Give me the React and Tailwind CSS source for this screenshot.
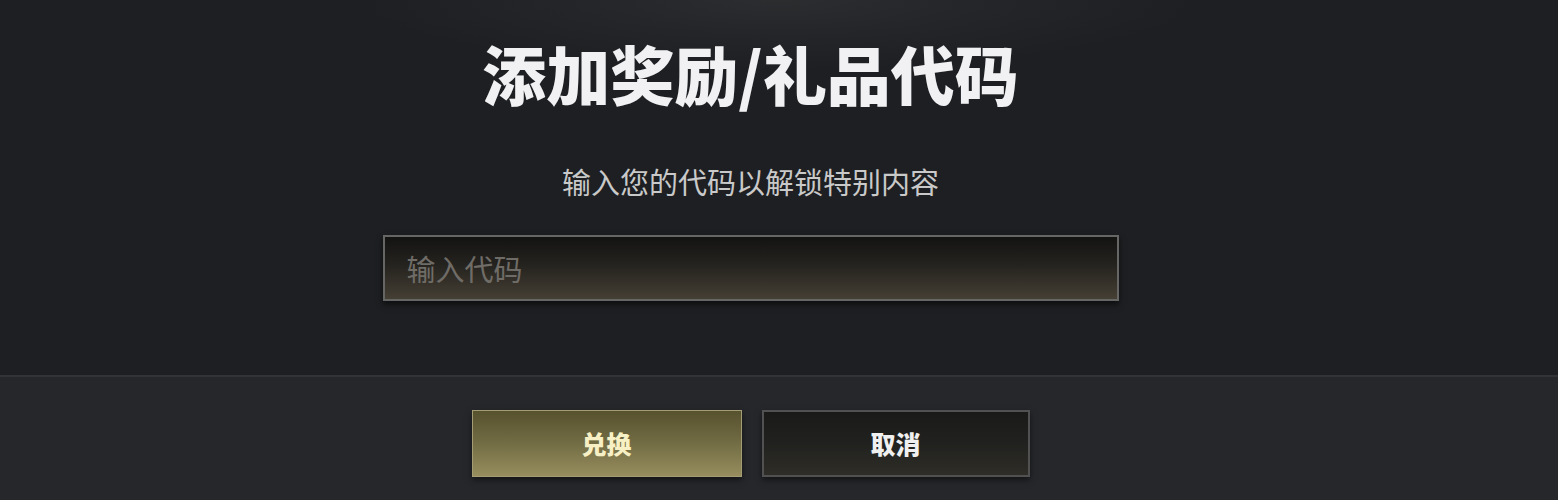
export default function App() {
  const font = { fontFamily: '"Noto Sans CJK SC", "Noto Sans", sans-serif' };
  return (
    <div className="w-full h-[500px] flex flex-col overflow-hidden" style={font}>
      <div className="h-[375px] bg-[#1d1f22] bg-[radial-gradient(ellipse_420px_70px_at_50%_0%,#2b2d2f_0%,#24262a_45%,#1d1f22_100%)] flex flex-col items-center pr-[57px]">
        <h1 className="mt-[40px] text-[64px] leading-none font-black text-[#f1f1f3]">
          添加奖励/礼品代码
        </h1>
        <p className="mt-[63px] text-[29px] leading-none text-[#c9c9c9]">
          输入您的代码以解锁特别内容
        </p>
        <div className="mt-[39px] w-[736px] h-[66px] border-2 border-[#666664] bg-[linear-gradient(to_bottom,#131312_0%,#25231f_45%,#453f34_100%)] shadow-[0_3px_6px_rgba(0,0,0,0.6)] flex items-center">
          <input
            className="w-full h-full bg-transparent outline-none pl-[22px] text-[29px] text-[#cfcfcf] placeholder:text-[#6f6c67]"
            style={font}
            placeholder="输入代码"
          />
        </div>
      </div>
      <div className="flex-1 bg-[#26272b] border-t-2 border-[#313336] flex justify-center gap-[20px] pt-[33px] pr-[57px]">
        <button
          className="w-[270px] h-[67px] border border-[#a49c72] bg-[linear-gradient(to_bottom,#57522e_0%,#6f6a42_45%,#978d5e_100%)] shadow-[0_3px_6px_rgba(0,0,0,0.5)] text-[25px] font-black text-[#f7f0c4]"
          style={font}
        >
          兑换
        </button>
        <button
          className="w-[268px] h-[67px] border-2 border-[#515152] bg-[linear-gradient(to_bottom,#1a1a19_0%,#21211f_50%,#2e2d27_100%)] shadow-[0_3px_6px_rgba(0,0,0,0.5)] text-[25px] font-black text-[#f0f0f0]"
          style={font}
        >
          取消
        </button>
      </div>
    </div>
  );
}
